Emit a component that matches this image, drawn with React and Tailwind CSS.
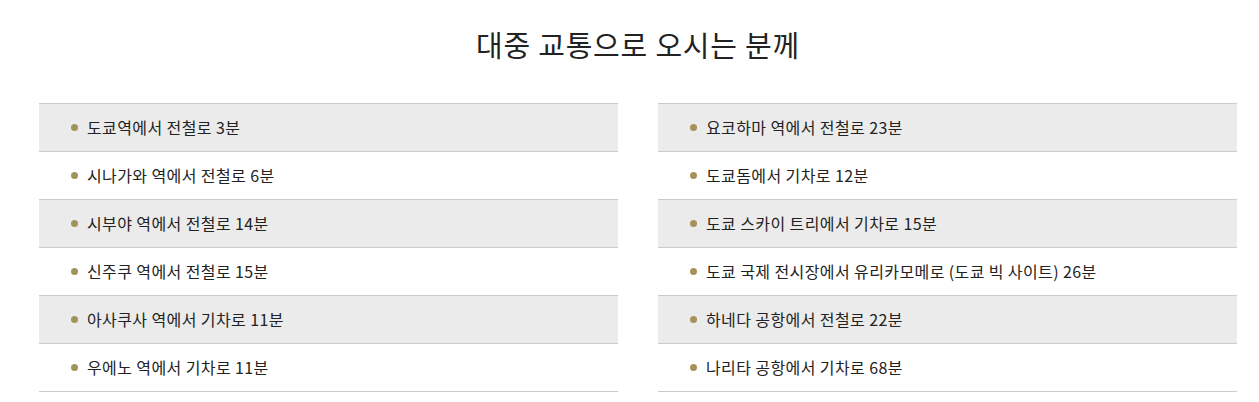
import React from "react";

const left = [
  "도쿄역에서 전철로 3분",
  "시나가와 역에서 전철로 6분",
  "시부야 역에서 전철로 14분",
  "신주쿠 역에서 전철로 15분",
  "아사쿠사 역에서 기차로 11분",
  "우에노 역에서 기차로 11분",
];

const right = [
  "요코하마 역에서 전철로 23분",
  "도쿄돔에서 기차로 12분",
  "도쿄 스카이 트리에서 기차로 15분",
  "도쿄 국제 전시장에서 유리카모메로 (도쿄 빅 사이트) 26분",
  "하네다 공항에서 전철로 22분",
  "나리타 공항에서 기차로 68분",
];

function RouteList({ items }) {
  return (
    <ul className="border-t border-[#cccccc]">
      {items.map((item, index) => (
        <li
          key={index}
          className={`flex items-center h-[48px] border-b border-[#cccccc] pl-[32px] ${
            index % 2 === 0 ? "bg-[#ebebeb]" : "bg-white"
          }`}
        >
          <span className="w-[7px] h-[7px] rounded-full bg-[#a4925c] mr-[9px]"></span>
          <span className="text-[16px] tracking-[0.4px] text-[#222222] -mt-[1px]">{item}</span>
        </li>
      ))}
    </ul>
  );
}

export default function App() {
  return (
    <div
      className="w-[1259px] h-[402px] bg-white overflow-hidden pl-[39px] pr-[22px]"
      style={{ fontFamily: '"Noto Sans CJK KR", "Noto Sans", sans-serif' }}
    >
      {/* Title */}
      <h2 className="pt-[25px] text-center text-[29px] tracking-[0.8px] leading-[38px] text-[#222222] font-normal">
        대중 교통으로 오시는 분께
      </h2>
      {/* Lists */}
      <div className="grid grid-cols-2 gap-[40px] mt-[40px]">
        <RouteList items={left} />
        <RouteList items={right} />
      </div>
    </div>
  );
}
